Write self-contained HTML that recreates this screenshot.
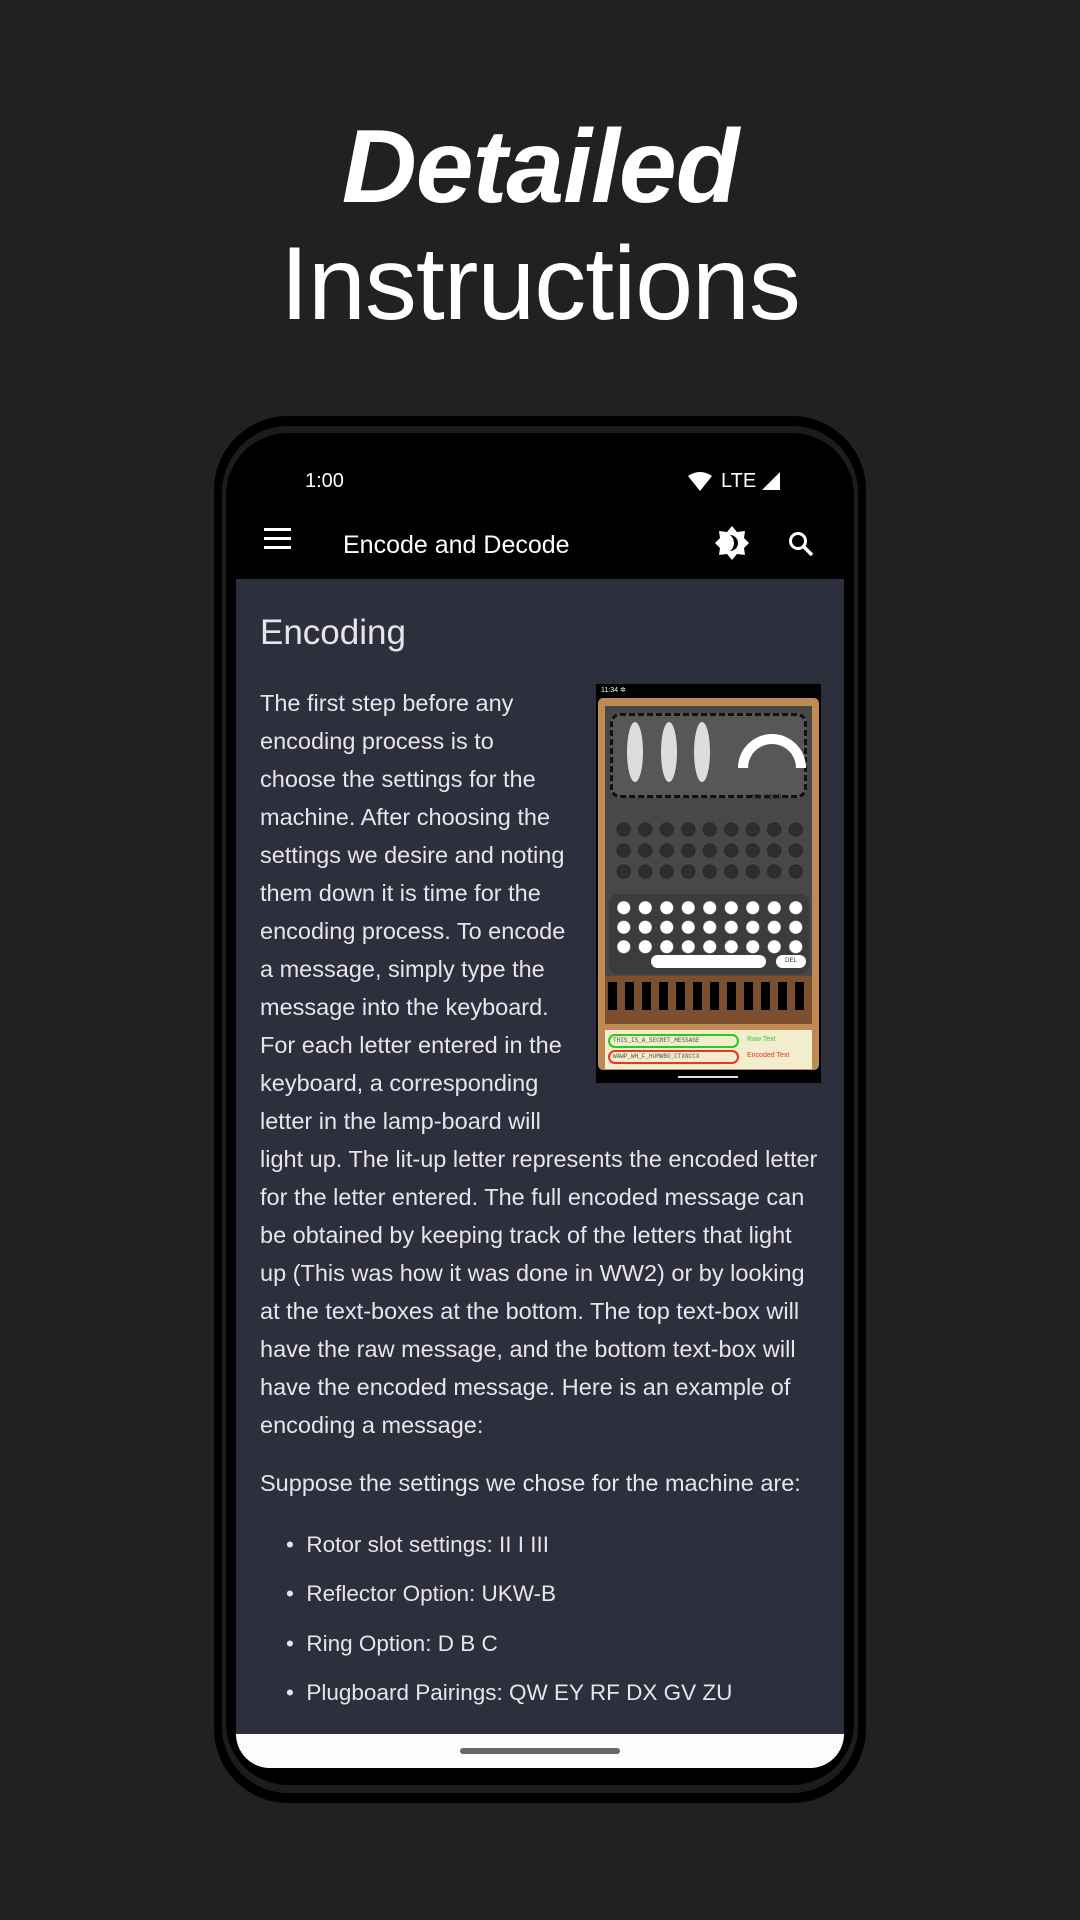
<!DOCTYPE html>
<html><head><meta charset="utf-8"><style>
*{margin:0;padding:0;box-sizing:border-box}
body{width:1080px;height:1920px;background:#212121;position:relative;overflow:hidden;font-family:"Liberation Sans",sans-serif;color:#fff}
.h1{position:absolute;left:0;width:1080px;text-align:center;font-size:104px;line-height:1}
.abs{position:absolute}
.txt{position:absolute;left:260px;font-size:23.5px;color:#e6e4ec;white-space:nowrap;line-height:38px}
</style></head><body>
<div class="h1" style="top:115px;font-weight:bold;font-style:italic;letter-spacing:-1px">Detailed</div>
<div class="h1" style="top:232px;letter-spacing:-1px">Instructions</div>

<div class="abs" style="left:214px;top:416px;width:652px;height:1387px;background:#000;border-radius:74px"></div>
<div class="abs" style="left:222px;top:426px;width:636px;height:1367px;background:#1c1c1c;border-radius:66px"></div>
<div class="abs" style="left:226px;top:433px;width:628px;height:1352px;background:#000;border-radius:62px"></div>
<div class="abs" style="left:236px;top:451px;width:608px;height:1317px;background:#2e2f3d;border-radius:34px;overflow:hidden">
 <div class="abs" style="left:0;top:0;width:608px;height:128px;background:#000"></div>
 <div class="abs" style="left:69px;top:19px;font-size:20px;color:#fff">1:00</div>
 <svg class="abs" style="left:452px;top:21px" width="24" height="20" viewBox="0 0 24 20"><path d="M0 4Q12-4 24 4L12 19Z" fill="#fff"/></svg>
 <div class="abs" style="left:485px;top:19px;font-size:20px">LTE</div>
 <svg class="abs" style="left:526px;top:21px" width="18" height="18"><path d="M18 0V18H0Z" fill="#fff"/></svg>
 <div class="abs" style="left:28px;top:86px;width:27px;height:3px;background:#fff;box-shadow:0 -9px 0 #fff,0 9px 0 #fff"></div>
 <div class="abs" style="left:107px;top:80px;font-size:25px">Encode and Decode</div>
 <svg class="abs" style="left:479px;top:75px" width="34" height="34" viewBox="0 0 34 34"><path d="M17 0L22 6 30 5 29 12 34 17 29 22 30 29 22 28 17 34 12 28 4 29 5 22 0 17 5 12 4 5 12 6Z" fill="#fff"/><path d="M15 9A8 8 0 0 1 15 25A10 10 0 0 0 15 9Z" fill="#000"/></svg>
 <svg class="abs" style="left:552px;top:80px" width="26" height="26" viewBox="0 0 26 26"><circle cx="10" cy="10" r="7.5" stroke="#fff" stroke-width="3" fill="none"/><path d="M15 15L24 24" stroke="#fff" stroke-width="3.5"/></svg>
 <div class="abs" style="left:24px;top:162px;font-size:35px;color:#e6e4ec">Encoding</div>
 <div class="abs" style="left:0;top:1283px;width:608px;height:34px;background:#fdfbfe"></div>
 <div class="abs" style="left:224px;top:1297px;width:160px;height:6px;border-radius:3px;background:#666"></div>
</div>

<div class="txt" style="top:684px">The first step before any</div>
<div class="txt" style="top:722px">encoding process is to</div>
<div class="txt" style="top:760px">choose the settings for the</div>
<div class="txt" style="top:798px">machine. After choosing the</div>
<div class="txt" style="top:836px">settings we desire and noting</div>
<div class="txt" style="top:874px">them down it is time for the</div>
<div class="txt" style="top:912px">encoding process. To encode</div>
<div class="txt" style="top:950px">a message, simply type the</div>
<div class="txt" style="top:988px">message into the keyboard.</div>
<div class="txt" style="top:1026px">For each letter entered in the</div>
<div class="txt" style="top:1064px">keyboard, a corresponding</div>
<div class="txt" style="top:1102px">letter in the lamp-board will</div>
<div class="txt" style="top:1140px">light up. The lit-up letter represents the encoded letter</div>
<div class="txt" style="top:1178px">for the letter entered. The full encoded message can</div>
<div class="txt" style="top:1216px">be obtained by keeping track of the letters that light</div>
<div class="txt" style="top:1254px">up (This was how it was done in WW2) or by looking</div>
<div class="txt" style="top:1292px">at the text-boxes at the bottom. The top text-box will</div>
<div class="txt" style="top:1330px">have the raw message, and the bottom text-box will</div>
<div class="txt" style="top:1368px">have the encoded message. Here is an example of</div>
<div class="txt" style="top:1406px">encoding a message:</div>
<div class="txt" style="top:1464px">Suppose the settings we chose for the machine are:</div>
<div class="txt" style="top:1526px;left:286px;font-size:22.5px">•&nbsp; Rotor slot settings: II I III</div>
<div class="txt" style="top:1575px;left:286px;font-size:22.5px">•&nbsp; Reflector Option: UKW-B</div>
<div class="txt" style="top:1625px;left:286px;font-size:22.5px">•&nbsp; Ring Option: D B C</div>
<div class="txt" style="top:1674px;left:286px;font-size:22.5px">•&nbsp; Plugboard Pairings: QW EY RF DX GV ZU</div>

<!-- embedded screenshot -->
<div class="abs" style="left:596px;top:684px;width:225px;height:399px;background:#000">
 <div class="abs" style="left:5px;top:2px;font-size:7px;color:#fff">11:34 ✲</div>
 <div class="abs" style="left:2px;top:14px;width:221px;height:372px;background:#c08a55;border-radius:5px"></div>
 <div class="abs" style="left:9px;top:22px;width:207px;height:270px;background:#484848"></div>
 <div class="abs" style="left:14px;top:29px;width:197px;height:85px;background:#575757;border:3px dashed #111;border-radius:10px"></div>
 <div class="abs" style="left:31px;top:38px;width:16px;height:60px;background:#ddd;border-radius:50%"></div>
 <div class="abs" style="left:65px;top:38px;width:16px;height:60px;background:#ddd;border-radius:50%"></div>
 <div class="abs" style="left:98px;top:38px;width:16px;height:60px;background:#ddd;border-radius:50%"></div>
 <div class="abs" style="left:142px;top:50px;width:68px;height:34px;border:10px solid #fff;border-bottom:none;border-radius:34px 34px 0 0"></div>
 <div class="abs" style="left:156px;top:110px;font-size:7px;color:#222;font-family:'Liberation Mono',monospace">M3 1939</div>
 <div class="abs" style="left:17px;top:135px;width:192px;height:66px;background:radial-gradient(circle,#2e2e2e 6px,#222 6.5px,transparent 7.5px) 0 0/21.5px 21px"></div>
 <div class="abs" style="left:13px;top:210px;width:200px;height:80px;background:#3c3c3c;border-radius:8px"></div>
 <div class="abs" style="left:17px;top:214px;width:192px;height:56px;background:radial-gradient(circle,#fff 6px,transparent 7px) 0 0/21.5px 19.5px"></div>
 <div class="abs" style="left:55px;top:271px;width:115px;height:13px;background:#fff;border-radius:7px"></div>
 <div class="abs" style="left:180px;top:271px;width:30px;height:13px;background:#fff;border-radius:7px;font-size:6px;color:#333;text-align:center;line-height:13px">DEL</div>
 <div class="abs" style="left:9px;top:292px;width:207px;height:48px;background:#7a5030"></div>
 <div class="abs" style="left:12px;top:298px;width:204px;height:28px;background:repeating-linear-gradient(90deg,#000 0 9px,transparent 9px 17px)"></div>
 <div class="abs" style="left:9px;top:346px;width:207px;height:39px;background:#f2edcc"></div>
 <div class="abs" style="left:12px;top:350px;width:131px;height:14px;border:2px solid #2c2;border-radius:7px;font-size:6px;color:#555;line-height:10px;padding-left:3px;font-family:'Liberation Mono',monospace">THIS_IS_A_SECRET_MESSAGE</div>
 <div class="abs" style="left:12px;top:366px;width:131px;height:14px;border:2px solid #e32;border-radius:7px;font-size:6px;color:#555;line-height:10px;padding-left:3px;font-family:'Liberation Mono',monospace">WAWP_WH_F_HUMWBO_CTXNCCX</div>
 <div class="abs" style="left:151px;top:352px;font-size:7px;color:#3c3">Raw Text</div>
 <div class="abs" style="left:151px;top:368px;font-size:7px;color:#e32">Encoded Text</div>
 <div class="abs" style="left:82px;top:392px;width:60px;height:2px;background:#ddd"></div>
</div>
</body></html>
